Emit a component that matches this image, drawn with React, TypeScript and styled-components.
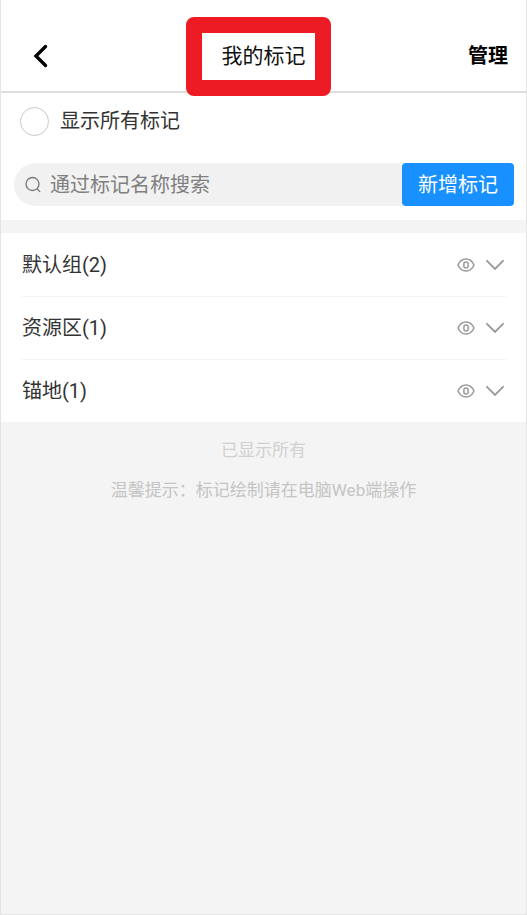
import React from "react";
import styled, { createGlobalStyle } from "styled-components";

const GlobalStyle = createGlobalStyle`
  *, *::before, *::after { box-sizing: border-box; }
  body { margin: 0; background: #f4f4f4; }
  body, button, input {
    font-family: Roboto, "Noto Sans CJK SC", sans-serif;
  }
  button { border: 0; padding: 0; background: none; cursor: pointer; }
`;

const Page = styled.div`
  min-height: 100vh;
  border: 1px solid #e4e4e4;
  border-top: 0;
  background: #f4f4f4;
  color: #333;
`;

const Header = styled.header`
  display: grid;
  grid-template-columns: 1fr auto 1fr;
  align-items: center;
  height: 93px;
  padding: 20px 18px 0;
  background: #fff;
  border-bottom: 2px solid #dedede;
`;

const BackButton = styled.button`
  display: flex;
  justify-self: start;
  padding-left: 12px;
  color: #000;
`;

const Title = styled.h1`
  position: relative;
  margin: 0;
  font-size: 21px;
  line-height: 30px;
  font-weight: 400;
  color: #111;
`;

const Highlight = styled.span`
  position: absolute;
  inset: -24px -25px -25px -36px;
  border: 16px solid #ed1c24;
  border-radius: 8px;
  pointer-events: none;
`;

const ManageButton = styled.button`
  justify-self: end;
  font-size: 20px;
  line-height: 30px;
  font-weight: 700;
  color: #000;
`;

const Tools = styled.section`
  padding: 0 12px 14px 13px;
  background: #fff;
`;

const ShowAll = styled.label`
  display: flex;
  align-items: center;
  gap: 11px;
  height: 56px;
  padding-left: 6px;
  font-size: 20px;
  line-height: 30px;
`;

const RoundCheck = styled.input`
  appearance: none;
  width: 29px;
  height: 29px;
  margin: 0;
  border: 1px solid #c8c8c8;
  border-radius: 50%;
  background: #fff;
  &:checked { border-color: #1890ff; background: #1890ff; }
`;

const SearchRow = styled.form`
  display: flex;
  height: 43px;
  margin-top: 14px;
`;

const SearchField = styled.label`
  flex: 1;
  min-width: 0;
  display: flex;
  align-items: center;
  gap: 8px;
  padding-left: 11px;
  border-radius: 22px 0 0 22px;
  background: #f1f1f1;
  color: #777;
`;

const SearchInput = styled.input`
  flex: 1;
  min-width: 0;
  height: 100%;
  padding: 0;
  border: 0;
  outline: 0;
  background: transparent;
  font-size: 20px;
  color: #333;
  &::placeholder { color: #808080; opacity: 1; }
`;

const AddButton = styled.button`
  padding: 0 16px 2px;
  border-radius: 4px;
  background: #1890ff;
  font-size: 20px;
  color: #fff;
`;

const Groups = styled.ul`
  margin: 13px 0 0;
  padding: 0 20px 0 21px;
  list-style: none;
  background: #fff;
`;

const Group = styled.li`
  display: flex;
  align-items: center;
  height: 63px;
  & + & { border-top: 1px solid #f3f3f3; }
`;

const GroupName = styled.span`
  flex: 1;
  font-size: 20px;
  line-height: 30px;
`;

const IconButton = styled.button`
  display: flex;
  margin-right: 2px;
  color: #999;
  & + & { margin-left: 9px; }
`;

const Notes = styled.footer`
  padding-top: 15px;
  text-align: center;
  font-size: 17px;
  line-height: 26px;
`;

const Note = styled.p<{ $tone: string }>`
  margin: 0 0 14px;
  color: ${(p) => p.$tone};
`;

const groups = [
  { name: "默认组", count: 2 },
  { name: "资源区", count: 1 },
  { name: "锚地", count: 1 },
];

const BackIcon = () => (
  <svg width="18" height="24" viewBox="0 0 18 24" fill="none" stroke="currentColor" strokeWidth="3.4" strokeLinecap="round" strokeLinejoin="miter">
    <path d="M14.5 2.500 5 12l9.500 9.500" />
  </svg>
);

const SearchIcon = () => (
  <svg width="17" height="17" viewBox="0 0 17 17" fill="none" stroke="currentColor" strokeWidth="1.3" strokeLinecap="round">
    <circle cx="7.500" cy="8" r="6.500" />
    <path d="m12.200 13 2.600 2.600" />
  </svg>
);

const EyeIcon = () => (
  <svg width="18" height="14" viewBox="0 0 18 14" fill="none" stroke="currentColor" strokeWidth="1.500">
    <path d="M1 7C2.800 3 5.600 1 9 1s6.200 2 8 6c-1.800 4-4.600 6-8 6S2.800 11 1 7Z" />
    <rect x="6.900" y="3.900" width="4.200" height="6.200" rx="2" />
  </svg>
);

const ChevronIcon = () => (
  <svg width="18" height="12" viewBox="0 0 18 12" fill="none" stroke="currentColor" strokeWidth="1.900" strokeLinecap="round">
    <path d="m1 1.800 8 8 8-8" />
  </svg>
);

export default function App() {
  return (
    <>
      <GlobalStyle />
      <Page>
        <Header>
          <BackButton type="button" aria-label="返回"><BackIcon /></BackButton>
          <Title>我的标记<Highlight /></Title>
          <ManageButton type="button">管理</ManageButton>
        </Header>
        <main>
          <Tools>
            <ShowAll>
              <RoundCheck type="checkbox" />
              显示所有标记
            </ShowAll>
            <SearchRow onSubmit={(e) => e.preventDefault()}>
              <SearchField>
                <SearchIcon />
                <SearchInput type="text" aria-label="通过标记名称搜索" placeholder="通过标记名称搜索" />
              </SearchField>
              <AddButton type="button">新增标记</AddButton>
            </SearchRow>
          </Tools>
          <Groups>
            {groups.map((g) => (
              <Group key={g.name}>
                <GroupName>{`${g.name}(${g.count})`}</GroupName>
                <IconButton type="button" aria-label={`显示${g.name}`}><EyeIcon /></IconButton>
                <IconButton type="button" aria-label={`展开${g.name}`}><ChevronIcon /></IconButton>
              </Group>
            ))}
          </Groups>
        </main>
        <Notes>
          <Note $tone="#d0d0d0">已显示所有</Note>
          <Note $tone="#c4c4c4">温馨提示：标记绘制请在电脑Web端操作</Note>
        </Notes>
      </Page>
    </>
  );
}
